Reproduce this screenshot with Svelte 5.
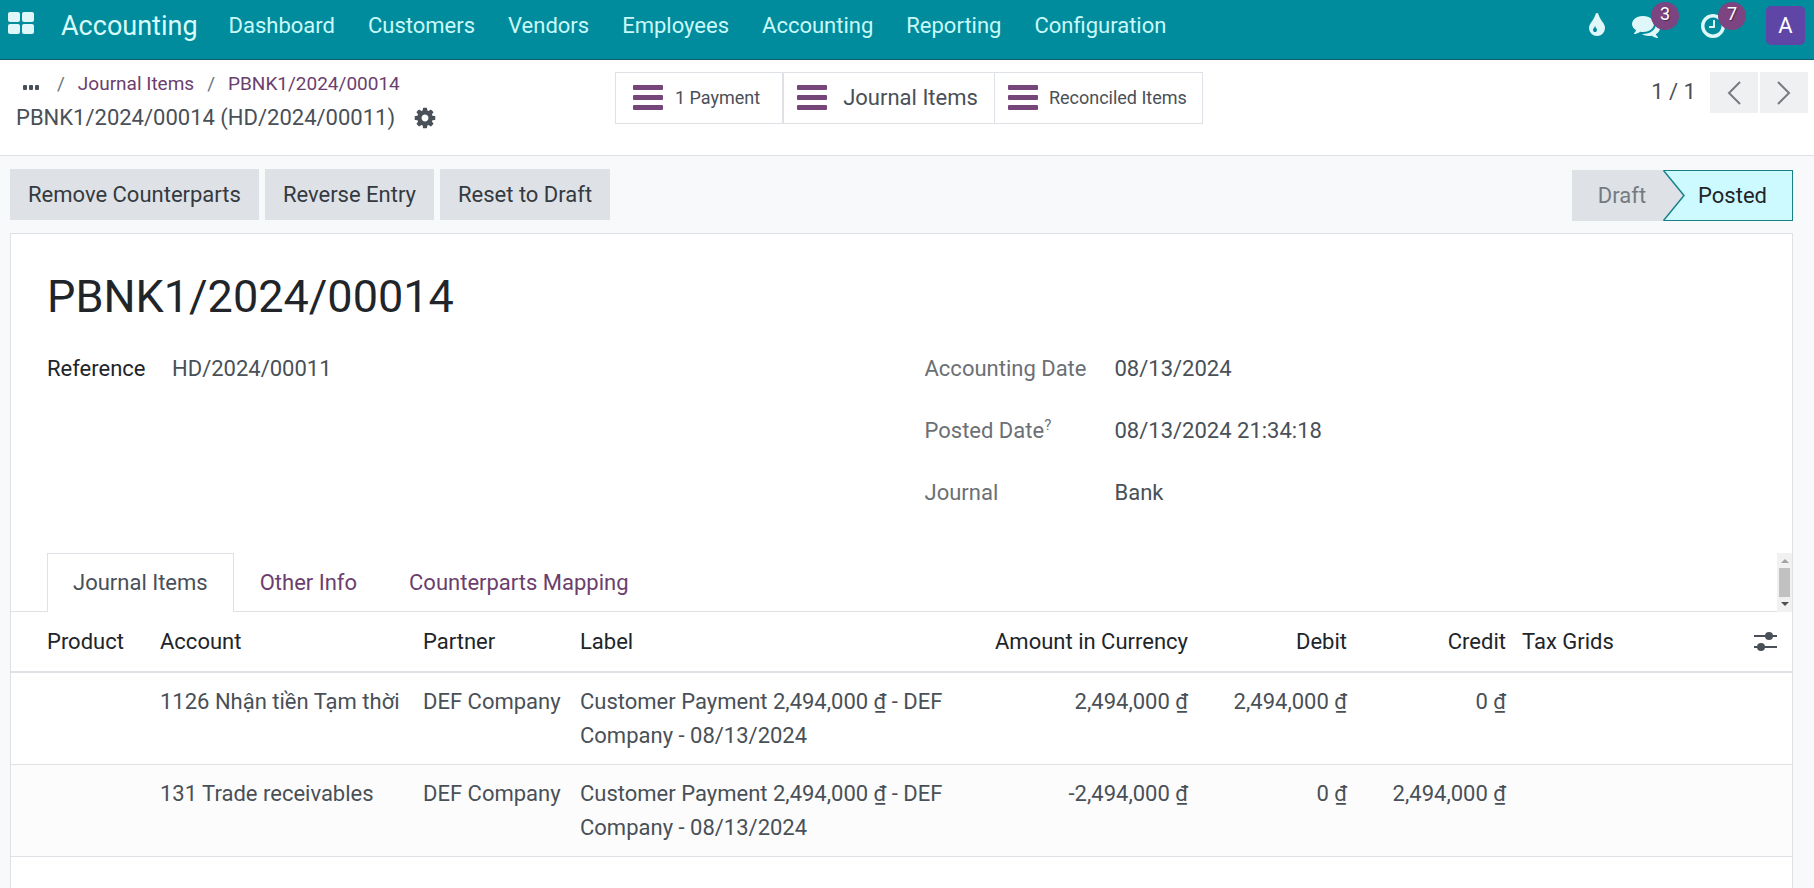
<script>
    const menus = ['Dashboard', 'Customers', 'Vendors', 'Employees', 'Accounting', 'Reporting', 'Configuration'];
    const tabs = ['Journal Items', 'Other Info', 'Counterparts Mapping'];

    let activeTab = 'Journal Items';

    const lines = [
        {
            account: '1126 Nhận tiền Tạm thời',
            partner: 'DEF Company',
            label: 'Customer Payment 2,494,000 ₫ - DEF Company - 08/13/2024',
            amount: '2,494,000 ₫',
            debit: '2,494,000 ₫',
            credit: '0 ₫',
        },
        {
            account: '131 Trade receivables',
            partner: 'DEF Company',
            label: 'Customer Payment 2,494,000 ₫ - DEF Company - 08/13/2024',
            amount: '-2,494,000 ₫',
            debit: '0 ₫',
            credit: '2,494,000 ₫',
        },
    ];
</script>

<div class="page">
    <header class="navbar">
        <button class="apps" aria-label="Apps">
            <svg width="26" height="22" viewBox="0 0 26 22" fill="currentColor">
                <rect width="12" height="10" rx="2" />
                <rect x="14" width="12" height="10" rx="2" />
                <rect y="12" width="12" height="10" rx="2" />
                <rect x="14" y="12" width="12" height="10" rx="2" />
            </svg>
        </button>
        <a class="brand" href="#accounting">Accounting</a>
        <nav class="menu">
            {#each menus as menu}
                <a href="#{menu.toLowerCase()}">{menu}</a>
            {/each}
        </nav>

        <div class="systray">
            <button class="tray drop" aria-label="Theme">
                <svg width="28" height="28" viewBox="0 0 1792 1792" fill="currentColor">
                    <path d="M896 1152q0-36-20-69-1-1-15.5-22.5t-25.5-38-25-44-21-50.5q-4-16-21-16t-21 16q-7 23-21 50.5t-25 44-25.5 38-15.5 22.5q-20 33-20 69 0 53 37.5 90.5t90.5 37.5 90.5-37.5 37.5-90.5zm512-128q0 212-150 362t-362 150-362-150-150-362q0-145 81-275 6-9 62.5-90.5t101-151 99.5-178 83-201.5q9-30 34-47t51-17 51.5 17 33.5 47q28 93 83 201.5t99.5 178 101 151 62.5 90.5q81 127 81 275z" />
                </svg>
            </button>
            <button class="tray messages" aria-label="Messages">
                <svg width="28" height="28" viewBox="0 0 1792 1792" fill="currentColor">
                    <path d="M1408 768q0 139-94 257t-256.5 186.5-353.5 68.5q-86 0-176-16-124 88-278 128-36 9-86 16h-3q-11 0-20.5-8t-11.5-21q-1-3-1-6.5t.5-6.5 2-6l2.5-5 3.5-5.5 4-5 4.5-5 4-4.5q5-6 23-25t26-29.5 22.5-29 25-38.5 20.5-44q-124-72-195-177t-71-224q0-139 94-257t256.5-186.5 353.5-68.5 353.5 68.5 256.5 186.5 94 257zm384 256q0 120-71 224.5t-195 176.5q10 24 20.5 44t25 38.5 22.5 29 26 29.5 23 25q1 1 4 4.5t4.5 5 4 5 3.5 5.5l2.5 5 2 6 .5 6.5-1 6.5q-3 14-13 22t-22 7q-50-7-86-16-154-40-278-128-90 16-176 16-271 0-472-132 58 4 88 4 161 0 309-45t264-129q125-92 192-212t67-254q0-77-23-152 129 71 204 178t75 230z" />
                </svg>
                <span class="badge">3</span>
            </button>
            <button class="tray activities" aria-label="Activities">
                <svg width="28" height="28" viewBox="0 0 1792 1792" fill="currentColor">
                    <path d="M1024 544v448q0 14-9 23t-23 9h-320q-14 0-23-9t-9-23v-64q0-14 9-23t23-9h224v-352q0-14 9-23t23-9h64q14 0 23 9t9 23zm416 352q0-148-73-273t-198-198-273-73-273 73-198 198-73 273 73 273 198 198 273 73 273-73 198-198 73-273zm224 0q0 209-103 385.5t-279.5 279.5-385.5 103-385.5-103-279.5-279.5-103-385.5 103-385.5 279.5-279.5 385.5-103 385.5 103 279.5 279.5 103 385.5z" />
                </svg>
                <span class="badge">7</span>
            </button>
            <button class="avatar">A</button>
        </div>
    </header>

    <div class="control-panel">
        <div class="breadcrumbs">
            <div class="crumbs">
                <button class="dots" aria-label="More">
                    <svg width="16" height="5" viewBox="0 0 16 5" fill="currentColor">
                        <rect width="4" height="5" rx="1" />
                        <rect x="6" width="4" height="5" rx="1" />
                        <rect x="12" width="4" height="5" rx="1" />
                    </svg>
                </button>
                <span class="slash">/</span>
                <a href="#items">Journal Items</a>
                <span class="slash">/</span>
                <a href="#entry">PBNK1/2024/00014</a>
            </div>
            <div class="current">
                <span>PBNK1/2024/00014 (HD/2024/00011)</span>
                <button class="gear" aria-label="Actions">
                    <svg width="24" height="24" viewBox="0 0 1792 1792" fill="currentColor">
                        <path d="M1152 896q0-106-75-181t-181-75-181 75-75 181 75 181 181 75 181-75 75-181zm512-109v222q0 12-8 23t-20 13l-185 28q-19 54-39 91 35 50 107 138 10 12 10 25t-9 23q-27 37-99 108t-94 71q-12 0-26-9l-138-108q-44 23-91 38-16 136-29 186-7 28-36 28h-222q-14 0-24.5-8.5t-11.5-21.5l-28-184q-49-16-90-37l-141 107q-10 9-25 9-14 0-25-11-126-114-165-168-7-10-7-23 0-12 8-23 15-21 51-66.5t54-70.5q-27-50-41-99l-183-27q-13-2-21-12.5t-8-23.5v-222q0-12 8-23t19-13l186-28q14-46 39-92-40-57-107-138-10-12-10-24 0-10 9-23 26-36 98.5-107.5t94.5-71.5q13 0 26 10l138 107q44-23 91-38 16-136 29-186 7-28 36-28h222q14 0 24.5 8.5t11.5 21.5l28 184q49 16 90 37l142-107q9-9 24-9 13 0 25 10 129 119 165 170 7 8 7 22 0 12-8 23-15 21-51 66.5t-54 70.5q26 50 41 98l183 28q13 2 21 12.5t8 23.5z" />
                    </svg>
                </button>
            </div>
        </div>

        <div class="stats">
            <button class="stat payment">
                <span class="bars"><i></i><i></i><i></i></span>
                1 Payment
            </button>
            <button class="stat items">
                <span class="bars"><i></i><i></i><i></i></span>
                Journal Items
            </button>
            <button class="stat reconciled">
                <span class="bars"><i></i><i></i><i></i></span>
                Reconciled Items
            </button>
        </div>

        <div class="pager">
            <span class="count">1 / 1</span>
            <button aria-label="Previous">
                <svg width="14" height="24" viewBox="0 0 14 24" fill="none" stroke="currentColor" stroke-width="2">
                    <path d="M13 1L2 12l11 11" />
                </svg>
            </button>
            <button aria-label="Next">
                <svg width="14" height="24" viewBox="0 0 14 24" fill="none" stroke="currentColor" stroke-width="2">
                    <path d="M1 1l11 11L1 23" />
                </svg>
            </button>
        </div>
    </div>

    <main>
        <div class="statusbar">
            <div class="actions">
                <button>Remove Counterparts</button>
                <button>Reverse Entry</button>
                <button>Reset to Draft</button>
            </div>
            <div class="states">
                <button class="draft">Draft</button>
                <button class="posted">
                    <svg class="arrow" width="22" height="51" viewBox="0 0 22 51">
                        <path class="arrow-fill" d="M0 0L21 25.500L0 51z" />
                        <path class="arrow-line" d="M0.500 0.500L21 25.500L0.500 50.500" />
                    </svg>
                    Posted
                </button>
            </div>
        </div>

        <div class="sheet">
            <h1>PBNK1/2024/00014</h1>

            <div class="groups">
                <dl class="group left">
                    <dt>Reference</dt>
                    <dd>HD/2024/00011</dd>
                </dl>
                <dl class="group right">
                    <dt>Accounting Date</dt>
                    <dd>08/13/2024</dd>
                    <dt>Posted Date<sup>?</sup></dt>
                    <dd>08/13/2024 21:34:18</dd>
                    <dt>Journal</dt>
                    <dd>Bank</dd>
                </dl>
            </div>

            <div class="notebook">
                <div class="tabs" role="tablist">
                    {#each tabs as tab}
                        <button
                            role="tab"
                            class:active={activeTab === tab}
                            aria-selected={activeTab === tab}
                            on:click={() => (activeTab = tab)}
                        >
                            {tab}
                        </button>
                    {/each}
                </div>
                <div class="scroller">
                    <span class="up"></span>
                    <span class="thumb"></span>
                    <span class="down"></span>
                </div>
            </div>

            <table>
                <colgroup>
                    <col class="c-product" />
                    <col class="c-account" />
                    <col class="c-partner" />
                    <col />
                    <col class="c-amount" />
                    <col class="c-money" />
                    <col class="c-money" />
                    <col class="c-tax" />
                    <col class="c-options" />
                </colgroup>
                <thead>
                    <tr>
                        <th>Product</th>
                        <th>Account</th>
                        <th>Partner</th>
                        <th>Label</th>
                        <th class="num">Amount in Currency</th>
                        <th class="num">Debit</th>
                        <th class="num">Credit</th>
                        <th>Tax Grids</th>
                        <th>
                            <button class="options" aria-label="Optional columns">
                                <svg width="23" height="24" viewBox="0 0 23 24" fill="currentColor">
                                    <rect y="5" width="23" height="2" />
                                    <rect y="16" width="23" height="2" />
                                    <circle cx="15" cy="6" r="4" />
                                    <circle cx="7" cy="17" r="4" />
                                </svg>
                            </button>
                        </th>
                    </tr>
                </thead>
                <tbody>
                    {#each lines as line}
                        <tr>
                            <td></td>
                            <td>{line.account}</td>
                            <td>{line.partner}</td>
                            <td>{line.label}</td>
                            <td class="num">{line.amount}</td>
                            <td class="num">{line.debit}</td>
                            <td class="num">{line.credit}</td>
                            <td></td>
                            <td></td>
                        </tr>
                    {/each}
                </tbody>
            </table>
        </div>
    </main>
</div>

<style>
    :global(body) {
        margin: 0;
    }

    .page {
        min-height: 100vh;
        display: flex;
        flex-direction: column;
        background: #f8f9fb;
        color: #495057;
        font-family: Roboto, 'Noto Sans', sans-serif;
        font-size: 22px;
        line-height: 34px;
    }

    .page,
    .page * {
        box-sizing: border-box;
    }

    button {
        margin: 0;
        padding: 0;
        border: 0;
        background: none;
        color: inherit;
        font: inherit;
        white-space: nowrap;
        cursor: pointer;
    }

    a {
        text-decoration: none;
        white-space: nowrap;
    }

    svg {
        display: block;
    }

    /* top bar */
    .navbar {
        height: 60px;
        padding: 0 9px 8px 8px;
        display: flex;
        align-items: center;
        background: #008c9c;
        border-bottom: 1px solid #0d5f6b;
        color: #dff7f8;
    }

    .apps {
        margin-right: 27px;
        padding-bottom: 6px;
    }

    .brand {
        margin-right: 15px;
        color: #d9fbfc;
        font-size: 27px;
    }

    .menu {
        display: flex;
        gap: 1px;
    }

    .menu a {
        padding: 0 16px;
        color: #c9f9fa;
    }

    .systray {
        margin-left: auto;
        display: flex;
        align-items: center;
    }

    .tray {
        position: relative;
    }

    .drop {
        margin-right: 21px;
    }

    .messages {
        margin-right: 39px;
    }

    .activities {
        margin-right: 39px;
    }

    .badge {
        position: absolute;
        top: -10px;
        left: 19px;
        width: 28px;
        height: 28px;
        border-radius: 50%;
        background: #7c4480;
        color: #fff;
        font-size: 18px;
        line-height: 24px;
        text-align: center;
        text-shadow: 1px 1px 1px rgba(0, 0, 0, 0.4);
    }

    .avatar {
        width: 39px;
        height: 39px;
        border-radius: 5px;
        background: #5f45a5;
        color: #fff;
    }

    /* breadcrumbs, stat buttons, pager */
    .control-panel {
        height: 96px;
        padding: 12px 6px 0 16px;
        display: grid;
        grid-template-columns: 599px auto 1fr;
        align-items: start;
        background: #fff;
        border-bottom: 1px solid #dee2e6;
    }

    .crumbs {
        display: flex;
        align-items: center;
        height: 24px;
        font-size: 19px;
        line-height: 24px;
    }

    .crumbs a {
        color: #6b3e6e;
    }

    .slash {
        margin: 0 13px;
        color: #6c757d;
    }

    .dots {
        padding: 6px 5px 0 7px;
    }

    .current {
        display: flex;
        align-items: center;
        gap: 18px;
        height: 44px;
    }

    .stats {
        display: flex;
    }

    .stat {
        height: 52px;
        display: flex;
        align-items: center;
        border: 1px solid #dee2e6;
        font-size: 18px;
    }

    .payment {
        padding: 0 22px 0 17px;
        gap: 12px;
        border-right-width: 2px;
    }

    .items {
        padding: 0 16px 0 13px;
        gap: 16px;
        border-left: 0;
        font-size: 22px;
    }

    .reconciled {
        padding: 0 15px 0 13px;
        gap: 11px;
        border-left: 0;
    }

    .bars {
        width: 30px;
        margin-bottom: 2px;
        display: flex;
        flex-direction: column;
        gap: 5px;
    }

    .bars i {
        height: 5px;
        border-radius: 1px;
        background: #76467a;
    }

    .pager {
        justify-self: end;
        display: flex;
        gap: 2px;
    }

    .count {
        margin-right: 12px;
        line-height: 40px;
    }

    .pager button {
        width: 48px;
        height: 41px;
        display: flex;
        align-items: center;
        justify-content: center;
        background: #eff0f2;
        color: #777b80;
    }

    /* form */
    main {
        flex: 1;
        padding: 13px 21px 0 10px;
        display: flex;
        flex-direction: column;
    }

    .statusbar {
        margin-bottom: 12px;
        display: flex;
        justify-content: space-between;
    }

    .actions {
        display: flex;
        gap: 6px;
    }

    .actions button {
        height: 51px;
        padding: 0 18px;
        background: #dee1e6;
        color: #343a40;
    }

    .states {
        display: flex;
        padding-top: 1px;
    }

    .states button {
        height: 51px;
    }

    .draft {
        padding: 0 17px 0 26px;
        background: #dee1e6;
        color: #757a80;
    }

    .posted {
        position: relative;
        padding: 0 25px 0 35px;
        border: 1px solid #1a8088;
        border-left: 0;
        background: #ccfaff;
        color: #212529;
    }

    .arrow {
        position: absolute;
        top: -1px;
        left: 0;
    }

    .arrow-fill {
        fill: #dee1e6;
    }

    .arrow-line {
        fill: none;
        stroke: #1a8088;
        stroke-width: 1.5;
    }

    .sheet {
        flex: 1;
        border: 1px solid #dee2e6;
        border-bottom: 0;
        background: #fff;
    }

    h1 {
        margin: 35px 36px 27px;
        color: #212529;
        font-size: 45px;
        font-weight: 400;
        line-height: 56px;
    }

    .groups {
        padding: 0 36px;
        display: grid;
        grid-template-columns: 1fr 1fr;
        gap: 46px;
    }

    .group {
        margin: 0;
        display: grid;
        align-content: start;
        grid-auto-rows: 34px;
        row-gap: 28px;
    }

    .left {
        grid-template-columns: 125px 1fr;
    }

    .right {
        grid-template-columns: 190px 1fr;
    }

    dt {
        color: #6c6f73;
    }

    .left dt {
        color: #212529;
    }

    dd {
        margin: 0;
    }

    sup {
        font-size: 15px;
        line-height: 1px;
    }

    .notebook {
        margin-top: 43px;
        display: flex;
        justify-content: space-between;
    }

    .tabs {
        flex: 1;
        padding-left: 36px;
        display: flex;
        box-shadow: inset 0 -1px #dee2e6;
    }

    .tabs button {
        height: 59px;
        padding: 0 25px;
        border: 1px solid transparent;
        border-bottom: 0;
        color: #6b3e6e;
    }

    .tabs .active {
        border-color: #dee2e6;
        background: #fff;
        color: #495057;
    }

    .scroller {
        width: 15px;
        padding: 6px 2px;
        display: flex;
        flex-direction: column;
        align-items: center;
        justify-content: space-between;
        background: #f1f1f1;
    }

    .up,
    .down {
        border: 4px solid transparent;
    }

    .up {
        border-top: 0;
        border-bottom-color: #a3a3a3;
    }

    .down {
        border-bottom: 0;
        border-top-color: #505050;
    }

    .thumb {
        width: 11px;
        height: 29px;
        background: #c1c1c1;
    }

    table {
        width: 100%;
        table-layout: fixed;
        border-collapse: separate;
        border-spacing: 0;
    }

    .c-product {
        width: 141px;
    }

    .c-account {
        width: 263px;
    }

    .c-partner {
        width: 157px;
    }

    .c-amount {
        width: 220px;
    }

    .c-money {
        width: 159px;
    }

    .c-tax {
        width: 232px;
    }

    .c-options {
        width: 46px;
    }

    th,
    td {
        padding: 12px 8px 11px;
        border-bottom: 1px solid #dee2e6;
        text-align: left;
        vertical-align: top;
        font-weight: 400;
    }

    th {
        padding: 13px 8px 12px;
        border-bottom-width: 2px;
        color: #212529;
        white-space: nowrap;
    }

    th:first-child {
        padding-left: 36px;
    }

    .num {
        text-align: right;
    }

    tbody tr:nth-child(even) {
        background: #fcfcfc;
    }

    .options {
        height: 34px;
        display: flex;
        align-items: center;
        color: #495057;
    }
</style>
